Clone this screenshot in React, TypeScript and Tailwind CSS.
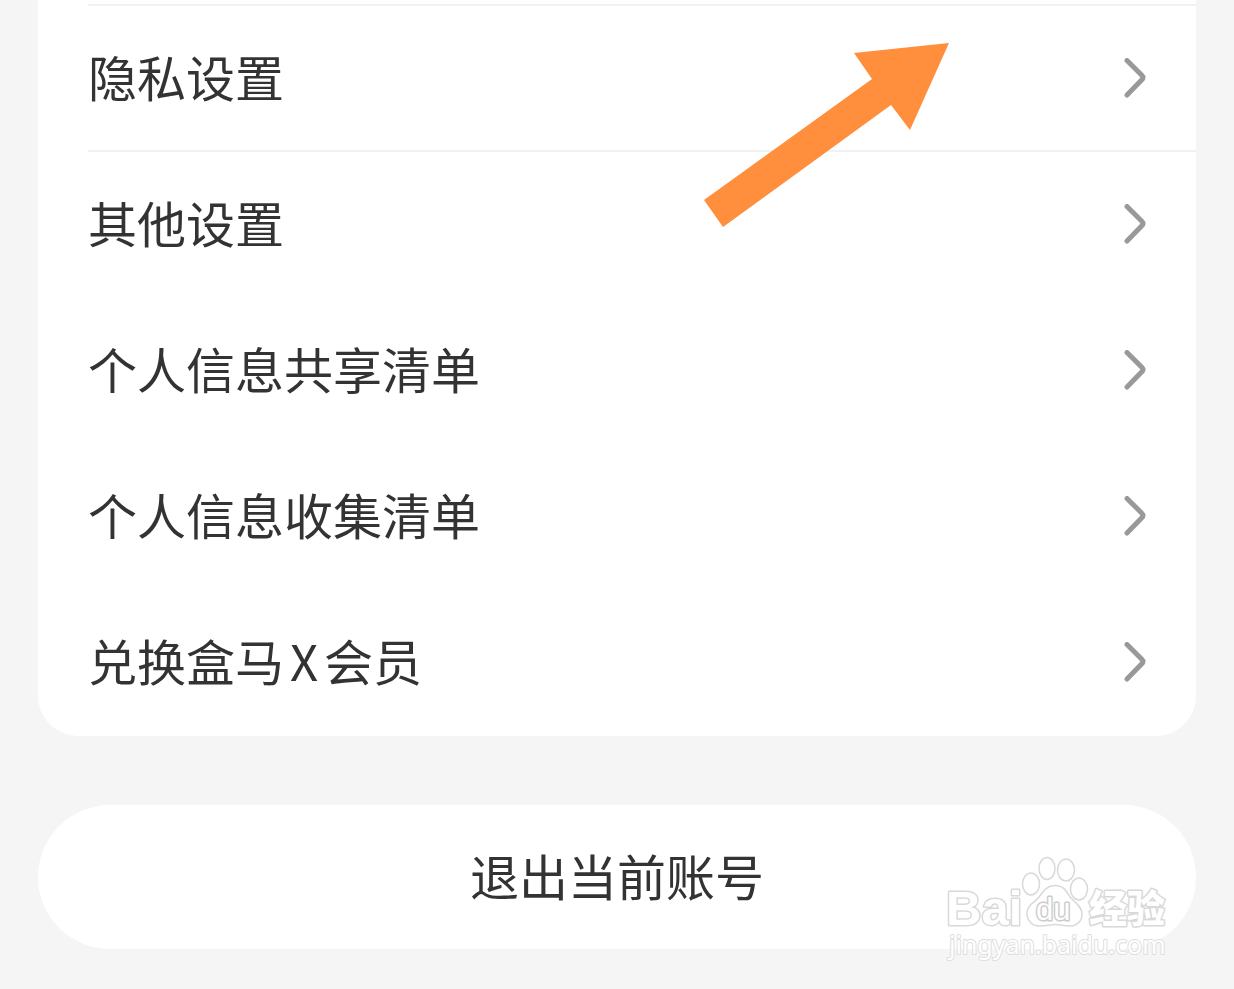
type Row = { label: string; latin?: string; rest?: string; divided?: boolean };

const rows: Row[] = [
  { label: "隐私设置", divided: true },
  { label: "其他设置" },
  { label: "个人信息共享清单" },
  { label: "个人信息收集清单" },
  { label: "兑换盒马", latin: "X", rest: "会员" },
];

function Chevron() {
  return (
    <svg
      className="h-10 w-6 shrink-0"
      viewBox="0 0 24 40"
      fill="none"
      stroke="#999999"
      strokeWidth="5"
      strokeLinecap="round"
      strokeLinejoin="round"
      aria-hidden="true"
    >
      <path d="M4 2.5 L18.8 17.2 Q21 19.500 18.8 21.8 L4 37" />
    </svg>
  );
}

function SettingRow({ label, latin, rest, divided }: Row) {
  return (
    <li className={divided ? "border-b-2 border-[#f1f1f1]" : "border-b-2 border-transparent"}>
      <a href="#" className="flex h-36 items-center justify-between pr-[49px]">
        <span className="pb-1">
          {label}
          {latin && <span className="mx-1.5">{latin}</span>}
          {rest}
        </span>
        <Chevron />
      </a>
    </li>
  );
}

function Arrow() {
  return (
    <svg
      className="pointer-events-none absolute left-[700px] top-10 h-[190px] w-[252px]"
      viewBox="700 40 252 190"
      aria-hidden="true"
    >
      <polygon
        fill="#ff8f3c"
        points="949,43 854,53 872,79 704,200 723,227 891,105 910,130"
      />
    </svg>
  );
}

function Watermark() {
  return (
    <svg
      className="pointer-events-none absolute right-14 top-[850px] h-[116px] w-[236px]"
      viewBox="942 850 236 116"
      fill="#ffffff"
      stroke="#d9d9d9"
      strokeWidth="1.5"
      strokeLinejoin="round"
    >
      <ellipse cx="1031" cy="884" rx="8.5" ry="11" />
      <ellipse cx="1047" cy="868.500" rx="8" ry="11" />
      <ellipse cx="1066" cy="870" rx="8.500" ry="11" />
      <ellipse cx="1079" cy="889" rx="8.500" ry="11" />
      <path d="M1055 885.500 C1064 885.500 1067 892 1070 897 C1074 902 1082 906 1082 914 C1082 922 1076 926.500 1069 926 C1063 925.500 1060 924.500 1055 924.500 C1050 924.500 1046 926 1040 926 C1032 926 1027 921 1027 913 C1027 905 1035 902 1039 897 C1043 892 1046 885.500 1055 885.500 Z" />
      <g style={{ paintOrder: "stroke" }} strokeWidth="3" fontWeight="700">
        <text x="946" y="925" fontSize="49" fontFamily="Liberation Sans, sans-serif">
          Bai
        </text>
        <text
          x="1036"
          y="920"
          fontSize="31"
          fontWeight="400"
          stroke="#cccccc"
          fontFamily="Liberation Sans, sans-serif"
        >
          du
        </text>
        <text x="1089" y="922" fontSize="38" fontWeight="900" fontFamily="Noto Sans CJK SC, sans-serif">
          经验
        </text>
        <text
          x="949"
          y="954"
          fontSize="25"
          fontWeight="400"
          strokeWidth="2"
          stroke="#dedede"
          fontFamily="Noto Sans, sans-serif"
        >
          jingyan.baidu.com
        </text>
      </g>
    </svg>
  );
}

export default function App() {
  return (
    <div className="relative min-h-screen bg-[#f5f5f5] px-[38px] pb-10 font-['Noto_Sans_CJK_SC',sans-serif] text-[49px] leading-[72px] text-[#333333]">
      <main>
        <nav className="rounded-b-[40px] bg-white pl-[50px] pt-1">
          <ul className="border-t-2 border-[#f1f1f1]">
            {rows.map((row) => (
              <SettingRow key={row.label} {...row} />
            ))}
          </ul>
        </nav>
        <button
          type="button"
          className="mt-[69px] flex h-36 w-full items-center justify-center rounded-full bg-white pb-1"
        >
          退出当前账号
        </button>
      </main>
      <Arrow />
      <Watermark />
    </div>
  );
}
